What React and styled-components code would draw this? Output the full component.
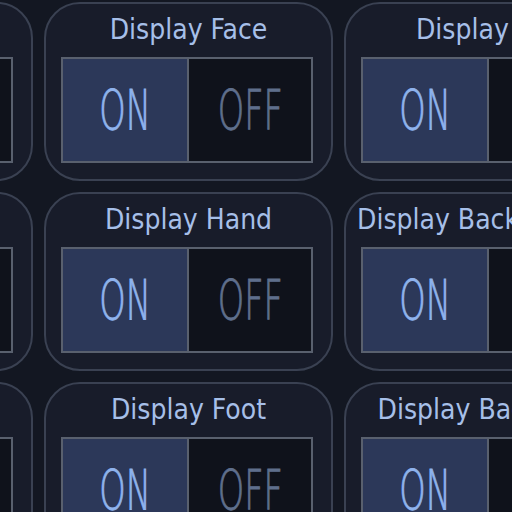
import React from 'react';
import styled, { createGlobalStyle } from 'styled-components';

const GlobalStyle = createGlobalStyle`
  html, body {
    margin: 0;
    padding: 0;
    background: #131722;
    overflow: hidden;
  }
  * {
    box-sizing: border-box;
  }
`;

const toggles = [
  { id: 'hair', label: 'Display Hair', on: true },
  { id: 'face', label: 'Display Face', on: true },
  { id: 'hat', label: 'Display Hat', on: true },
  { id: 'arm', label: 'Display Arm', on: true },
  { id: 'hand', label: 'Display Hand', on: true },
  { id: 'back', label: 'Display Back Accessory', on: true },
  { id: 'leg', label: 'Display Leg', on: true },
  { id: 'foot', label: 'Display Foot', on: true },
  { id: 'pack', label: 'Display Backpack', on: true },
];

export default function App() {
  return (
    <>
      <GlobalStyle />
      <Grid>
        {toggles.map((t) => (
          <Card key={t.id}>
            <Title>{t.label}</Title>
            <Switch>
              <Half side="on">
                <Label>ON</Label>
              </Half>
              <Half side="off">
                <Label>OFF</Label>
              </Half>
            </Switch>
          </Card>
        ))}
      </Grid>
    </>
  );
}

const Grid = styled.div`
  display: grid;
  grid-template-columns: repeat(3, 289px);
  grid-auto-rows: 179px;
  gap: 11px;
  margin: 2px 0 0 -256px;
  width: 889px;
`;

const Card = styled.div`
  display: flex;
  flex-direction: column;
  background: #181c2a;
  border: 2px solid #3a4152;
  border-radius: 36px;
`;

const Title = styled.div`
  flex: 1;
  display: flex;
  align-items: center;
  padding: 0 11px 2px;
  justify-content: safe center;
  white-space: nowrap;
  font-family: 'DejaVu Sans Condensed', 'DejaVu Sans', sans-serif;
  font-stretch: condensed;
  font-size: 28px;
  color: #a6bfe8;
`;

const Switch = styled.div`
  display: grid;
  grid-template-columns: 1fr 1fr;
  height: 106px;
  margin: 0 18px 16px 15px;
  border: 2px solid #59606e;
`;

const Half = styled.div`
  display: flex;
  align-items: center;
  justify-content: center;
  background: ${(p) => (p.side === 'on' ? '#2c3859' : '#0f121b')};
  color: ${(p) => (p.side === 'on' ? '#8fb3ec' : '#5f6f8c')};
  border-left: ${(p) => (p.side === 'off' ? '2px solid #59606e' : 'none')};
  overflow: hidden;
`;

const Label = styled.span`
  display: inline-block;
  font-family: 'DejaVu Sans', sans-serif;
  font-weight: 200;
  font-size: 56px;
  line-height: 1;
  -webkit-text-stroke: 1px currentColor;
  transform: scaleX(0.6);
`;
